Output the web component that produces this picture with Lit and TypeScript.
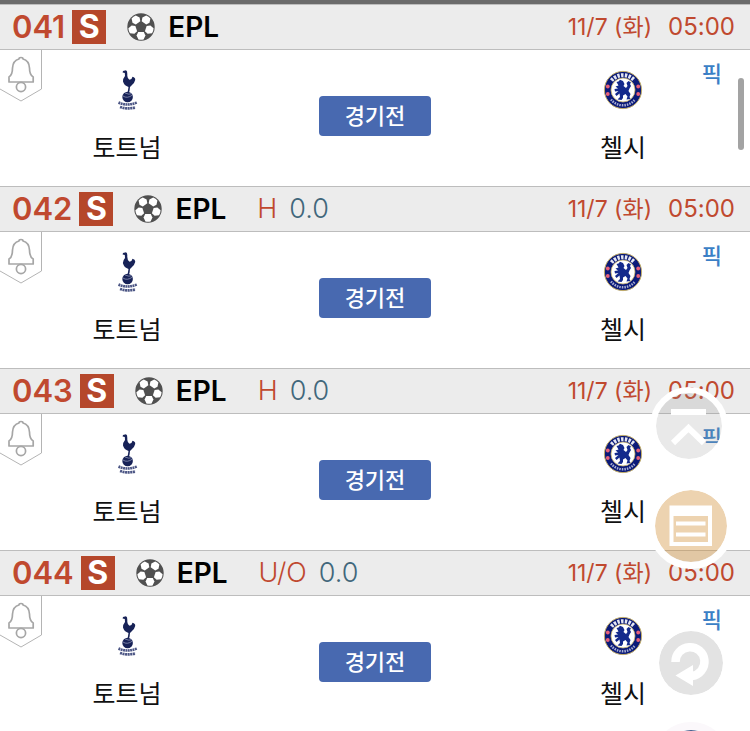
import { LitElement, html, css, svg, nothing } from "lit";
import { customElement, property } from "lit/decorators.js";

interface Match {
  no: string;
  kind?: string;
  line?: string;
}

const MATCHES: Match[] = [
  { no: "041" },
  { no: "042", kind: "H", line: "0.0" },
  { no: "043", kind: "H", line: "0.0" },
  { no: "044", kind: "U/O", line: "0.0" },
];

const patches = [36, 108, 180, 252, 324];

const ball = html`<svg class="ball" viewBox="0 0 28 28" aria-hidden="true">
  <circle cx="14" cy="14" r="13.7" fill="#505050" />
  ${patches.map(
    (a) => svg`<path transform="rotate(${a} 14 14)" fill="#fff"
      d="M11.2 9 L9.6 5.6 L11.4 1.6 Q14 .8 16.6 1.6 L18.4 5.6 L16.8 9 Z" />`
  )}
</svg>`;

const bell = html`<svg class="tab" viewBox="0 0 42 53" fill="none" aria-hidden="true">
  <path d="M41.5 0 V39 L21 51 L0 39" stroke="#b4b4b4" />
  <g stroke="#a6a6a6" stroke-width="1.7" stroke-linejoin="round">
    <path d="M19 9 Q19 7.500 21 7.500 Q23 7.500 23 9 Q29 10.500 29.500 18 Q29.500 25 33.200 27 V32 H9 V27 Q12.500 25 12.500 18 Q13 10.500 19 9 Z" />
    <circle cx="21" cy="37" r="4.600" />
  </g>
</svg>`;

const tottenham = html`<svg class="crest" viewBox="0 0 40 40" role="img" aria-label="토트넘">
  <g fill="#172257">
    <path d="M16 1 L19 .3 Q20.500 1 20.300 4 Q20 8 22.500 9.800 Q25 9.500 25.500 6.800 Q28.500 7.500 28.200 10 Q27.500 13 25 15 L23 17 L22.600 20.500 L22 22.500 H20.600 L21.500 17 Q17 15.500 16 11.500 Q15.500 9 18 6 L17.800 3 L15.600 2.600 Z" />
    <circle cx="20.600" cy="27" r="5.300" />
  </g>
  <path d="M16 26 Q20 29 25.500 25 M18 23 Q22 25 25 23.600" fill="none" stroke="#8f96b8" stroke-width=".8" />
  <path d="M11.500 32.500 Q20 36.500 30 32.500" fill="none" stroke="#4c5685" stroke-width="2.600" stroke-dasharray="1.900 .5" />
  <path d="M13 37 Q20 39.500 28.500 37.500" fill="none" stroke="#4c5685" stroke-width="2.600" stroke-dasharray="2.100 .5" />
</svg>`;

const chelsea = html`<svg class="crest" viewBox="0 0 40 40" role="img" aria-label="첼시">
  <circle cx="20" cy="20" r="18.600" fill="#0b1a78" stroke="#c2ad6a" />
  <circle cx="20" cy="20" r="12" fill="#fff" stroke="#c2ad6a" stroke-width=".8" />
  <path d="M8.500 10.500 A15 15 0 0 1 31.500 10.500" fill="none" stroke="#e4e6f2" stroke-width="4" stroke-dasharray="2.400 1.300" />
  <path d="M8 29.500 A15.300 15.300 0 0 0 32 29.500" fill="none" stroke="#a9afd4" stroke-width="2.400" stroke-dasharray="1.500 1" />
  <g fill="#e8617a">
    <circle cx="4.800" cy="16.500" r="1.900" /><circle cx="4.800" cy="24" r="1.900" />
    <circle cx="35.200" cy="16.500" r="1.900" /><circle cx="35.200" cy="24" r="1.900" />
  </g>
  <path fill="#142a8c" d="M13.500 12 L15.500 11.500 L17 9.800 L20 11 L21.500 14 L20.500 16 L23 18 L24.500 16 L23.500 13 L25.500 11 L28 12.500 L27 14 L28 16 L26.500 18.500 L25.500 21 L27.500 24 L26.500 27 L27.500 29 L23.500 29.500 L24.500 26.500 L22.500 24 L20 25.500 L20 28 L18.500 30 L14.500 29.500 L17 27 L16.500 23.500 L13.500 26 L12 24 L15.500 21 L12 21.500 L11.500 19 L15 18.500 L12.500 16.500 L15.500 15.500 Z" />
</svg>`;

@customElement("match-row")
class MatchRow extends LitElement {
  @property({ attribute: false }) match!: Match;

  static styles = css`
    :host {
      display: block;
    }
    .head {
      display: flex;
      align-items: center;
      box-sizing: border-box;
      height: 46px;
      padding: 0 15px 0 12px;
      background: #ececec;
      border-top: 1px solid #bdbdbd;
      border-bottom: 1px solid #bdbdbd;
      color: #c0492f;
      line-height: 34px;
      white-space: nowrap;
    }
    .no {
      font-size: 31px;
      font-weight: 600;
    }
    .badge {
      width: 34px;
      height: 34px;
      margin-left: 7px;
      background: #b5472b;
      color: #fff;
      font-size: 32px;
      font-weight: 700;
      text-align: center;
    }
    .ball {
      width: 28px;
      height: 28px;
      margin: 0 13px 0 21px;
    }
    .league {
      color: #000;
      font-size: 28px;
      font-weight: 600;
    }
    .kind {
      margin-left: 31px;
      font-size: 27px;
      font-weight: 300;
    }
    .line {
      margin-left: 12px;
      color: #41677b;
      font-size: 27px;
      font-weight: 300;
    }
    .when {
      margin-left: auto;
      font-size: 24px;
    }
    .date {
      margin-right: 16px;
      font-size: 23px;
    }
    .body {
      position: relative;
      display: grid;
      grid-template-columns: repeat(3, 1fr);
      height: 136px;
      padding: 0 3px;
    }
    .alarm {
      position: absolute;
      left: 0;
      top: 0;
      padding: 0;
      border: 0;
      background: none;
    }
    .tab {
      display: block;
      width: 42px;
      height: 53px;
    }
    .team {
      display: flex;
      flex-direction: column;
      align-items: center;
      gap: 20px;
      padding-top: 20px;
      font-size: 25px;
      line-height: 36px;
      color: #111;
    }
    .crest {
      width: 40px;
      height: 40px;
    }
    .state {
      justify-self: center;
      width: 112px;
      height: 40px;
      margin-top: 46px;
      padding: 0 0 4px;
      border: 0;
      border-radius: 4px;
      background: #4869b0;
      color: #fff;
      font: 500 22px/36px "Noto Sans CJK KR", sans-serif;
    }
    .pick {
      position: absolute;
      right: 28px;
      top: 6px;
      color: #3b7fc6;
      font-size: 22px;
      font-weight: 500;
      line-height: 36px;
      text-decoration: none;
    }
  `;

  render() {
    const m = this.match;
    return html`
      <header class="head">
        <span class="no">${m.no}</span>
        <span class="badge">S</span>
        ${ball}
        <span class="league">EPL</span>
        ${m.kind
          ? html`<span class="kind">${m.kind}</span><span class="line">${m.line}</span>`
          : nothing}
        <span class="when"><span class="date">11/7 (화)</span><span>05:00</span></span>
      </header>
      <div class="body">
        <button class="alarm" aria-label="알림">${bell}</button>
        <div class="team">${tottenham}<span>토트넘</span></div>
        <button class="state">경기전</button>
        <div class="team">${chelsea}<span>첼시</span></div>
        <a class="pick" href="#pick">픽</a>
      </div>
    `;
  }
}

@customElement("app-root")
class AppRoot extends LitElement {
  static styles = css`
    :host {
      display: block;
      position: relative;
      height: 100vh;
      overflow: hidden;
      background: #fff;
      font-family: Inter, "Noto Sans CJK KR", sans-serif;
    }
    .top {
      height: 4px;
      background: #6b6b6b;
    }
    .thumb {
      position: absolute;
      right: 6px;
      top: 78px;
      width: 6px;
      height: 72px;
      border-radius: 3px;
      background: #a3a3a3;
    }
    .tools {
      position: absolute;
      right: 16px;
      top: 387px;
      display: flex;
      flex-direction: column;
      align-items: center;
    }
    .tool {
      box-sizing: border-box;
      width: 78px;
      height: 78px;
      padding: 0;
      border: 6px solid #fff;
      border-radius: 50%;
      background: rgba(145, 145, 145, 0.2) padding-box;
    }
    .tool svg {
      display: block;
      width: 100%;
      height: 100%;
    }
    .up {
      align-self: flex-start;
      margin-left: 2px;
    }
    .slip {
      width: 86px;
      height: 86px;
      margin: 18px 0 55px;
      border-width: 7px;
      background: rgba(210, 145, 57, 0.4) padding-box;
    }
    .reload {
      border-width: 7px;
      background: #e3e3e3 padding-box;
    }
    .more {
      margin-top: 20px;
      border-width: 8px;
      border-color: #fbf8fb;
      background: #48618f padding-box;
    }
  `;

  render() {
    return html`
      <div class="top"></div>
      <main>${MATCHES.map((m) => html`<match-row .match=${m}></match-row>`)}</main>
      <div class="thumb"></div>
      <nav class="tools">
        <button class="tool up" aria-label="맨 위로">
          <svg viewBox="0 0 66 66" fill="none" stroke="#fff">
            <path d="M15 19 H50" stroke-width="6" />
            <path d="M17 50 L32.500 35 L48 50" stroke-width="6" />
          </svg>
        </button>
        <button class="tool slip" aria-label="목록">
          <svg viewBox="0 0 72 72">
            <path fill="#fff" fill-rule="evenodd" d="M14.500 15.500 H57 V56 H14.500 Z M18.500 26 V52 H53 V26 Z" />
            <path d="M21 33.500 H50.500 M21 44.500 H50.500" stroke="#fff" stroke-width="4" />
          </svg>
        </button>
        <button class="tool reload" aria-label="새로고침">
          <svg viewBox="0 0 64 64">
            <path d="M16.500 31 A14.500 14.500 0 1 1 33 45" fill="none" stroke="#fff" stroke-width="8.500" />
            <path d="M16.500 44.500 L34 34 V55 Z" fill="#fff" />
          </svg>
        </button>
        <button class="tool more" aria-label="더보기"></button>
      </nav>
    `;
  }
}
